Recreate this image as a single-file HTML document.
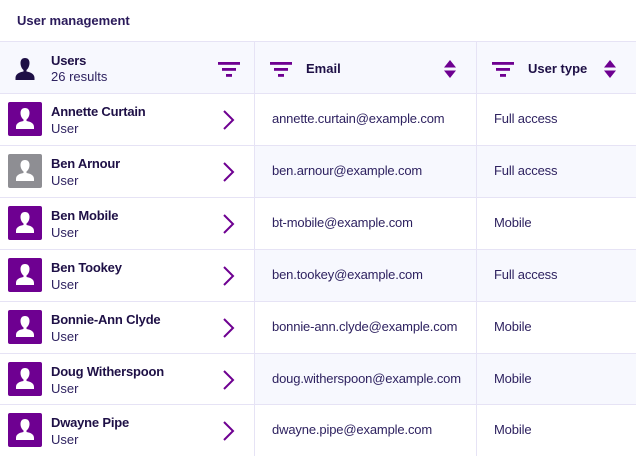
<!DOCTYPE html>
<html><head><meta charset="utf-8"><style>
*{margin:0;padding:0;box-sizing:border-box}
body{width:636px;height:456px;overflow:hidden;background:#fff;font-family:"Liberation Sans",sans-serif;color:#1e1046;position:relative}
.title{position:absolute;left:17px;top:13px;font-size:13px;font-weight:bold;color:#2a1a5a}
.row{position:absolute;left:0;width:636px;height:52px;border-top:1px solid #e6e3f5}
.c1{position:absolute;left:0;top:0;width:255px;height:100%;background:#fff;border-right:1px solid #e6e3f5}
.c2{position:absolute;left:255px;top:0;width:222px;height:100%;border-right:1px solid #e6e3f5}
.hdr{background:#f7f8fe}
.hdr .c1{background:#f7f8fe}
.alt{background:#f7f8fe}
.av{position:absolute;left:8px;top:8px;width:34px;height:34px;border-radius:2px;background:#6e0091}
.av.g{background:#8e8e93}
.av svg{position:absolute;left:0;top:0}
.nm{position:absolute;left:51px;top:10px;font-size:13px;font-weight:bold;line-height:16px;letter-spacing:-0.2px}
.sub{position:absolute;left:51px;top:27px;font-size:13px;line-height:16px;color:#2e2260}
.chev{position:absolute;left:220px;top:15px}
.em{position:absolute;left:272px;top:17px;font-size:13px;color:#2e2260;letter-spacing:-0.15px}
.ty{position:absolute;left:494px;top:17px;font-size:13px;color:#2e2260;letter-spacing:-0.15px}
.hb{position:absolute;font-size:13px;font-weight:bold}
</style></head><body>
<div class="title">User management</div>

<div class="row hdr" style="top:41px;height:52px">
 <div class="c1">
  <svg style="position:absolute;left:14px;top:15px" width="22" height="24" viewBox="0 0 22 24"><path d="M11 1c3 0 4.5 2 4.5 5s-1.5 6-3 7v1.5c5 .8 8 3 8 6.5v2H1.5v-2c0-3.5 3-5.7 8-6.5V13c-1.5-1-3-4-3-7S8 1 11 1z" fill="#1e1046"/></svg>
  <div class="nm" style="top:11px">Users</div>
  <div class="sub" style="top:27px;color:#2e2260">26 results</div>
  <svg style="position:absolute;left:218px;top:19px" width="22" height="16"><rect x="0" y="1" width="22" height="2.8" fill="#6e0091"/><rect x="4" y="7" width="14" height="2.8" fill="#6e0091"/><rect x="8" y="13" width="6" height="2.8" fill="#6e0091"/></svg>
 </div>
 <div class="c2">
  <svg style="position:absolute;left:15px;top:19px" width="22" height="16"><rect x="0" y="1" width="22" height="2.8" fill="#6e0091"/><rect x="4" y="7" width="14" height="2.8" fill="#6e0091"/><rect x="8" y="13" width="6" height="2.8" fill="#6e0091"/></svg>
  <div class="hb" style="left:51px;top:19px">Email</div>
  <svg style="position:absolute;left:188px;top:15px" width="14" height="24"><path d="M1 10.5L7 3l6 7.5z M1 13.5l6 7.5 6-7.5z" fill="#6e0091"/></svg>
 </div>
 <svg style="position:absolute;left:492px;top:19px" width="22" height="16"><rect x="0" y="1" width="22" height="2.8" fill="#6e0091"/><rect x="4" y="7" width="14" height="2.8" fill="#6e0091"/><rect x="8" y="13" width="6" height="2.8" fill="#6e0091"/></svg>
 <div class="hb" style="left:528px;top:19px">User type</div>
 <svg style="position:absolute;left:603px;top:15px" width="14" height="24"><path d="M1 10.5L7 3l6 7.5z M1 13.5l6 7.5 6-7.5z" fill="#6e0091"/></svg>
</div>

<div class="row" style="top:93px"><div class="c1"><div class="av"><svg width="34" height="34" viewBox="0 0 34 34"><path d="M17 6c3 0 4.5 2 4.5 5s-1.5 5.5-3 6.5v1.5c4.5.7 7.5 2.5 7.5 6v2H8v-2c0-3.5 3-5.3 7.5-6v-1.5c-1.5-1-3-3.5-3-6.5S14 6 17 6z" fill="#fff"/></svg></div><div class="nm">Annette Curtain</div><div class="sub">User</div><svg class="chev" width="16" height="22"><path d="M4 2l9 9-9 9" stroke="#6e0091" stroke-width="2" fill="none"/></svg></div><div class="c2"></div><div class="em">annette.curtain@example.com</div><div class="ty">Full access</div></div>

<div class="row alt" style="top:145px"><div class="c1"><div class="av g"><svg width="34" height="34" viewBox="0 0 34 34"><path d="M17 6c3 0 4.5 2 4.5 5s-1.5 5.5-3 6.5v1.5c4.5.7 7.5 2.5 7.5 6v2H8v-2c0-3.5 3-5.3 7.5-6v-1.5c-1.5-1-3-3.5-3-6.5S14 6 17 6z" fill="#fff"/></svg></div><div class="nm">Ben Arnour</div><div class="sub">User</div><svg class="chev" width="16" height="22"><path d="M4 2l9 9-9 9" stroke="#6e0091" stroke-width="2" fill="none"/></svg></div><div class="c2"></div><div class="em">ben.arnour@example.com</div><div class="ty">Full access</div></div>

<div class="row" style="top:197px"><div class="c1"><div class="av"><svg width="34" height="34" viewBox="0 0 34 34"><path d="M17 6c3 0 4.5 2 4.5 5s-1.5 5.5-3 6.5v1.5c4.5.7 7.5 2.5 7.5 6v2H8v-2c0-3.5 3-5.3 7.5-6v-1.5c-1.5-1-3-3.5-3-6.5S14 6 17 6z" fill="#fff"/></svg></div><div class="nm">Ben Mobile</div><div class="sub">User</div><svg class="chev" width="16" height="22"><path d="M4 2l9 9-9 9" stroke="#6e0091" stroke-width="2" fill="none"/></svg></div><div class="c2"></div><div class="em">bt-mobile@example.com</div><div class="ty">Mobile</div></div>

<div class="row alt" style="top:249px"><div class="c1"><div class="av"><svg width="34" height="34" viewBox="0 0 34 34"><path d="M17 6c3 0 4.5 2 4.5 5s-1.5 5.5-3 6.5v1.5c4.5.7 7.5 2.5 7.5 6v2H8v-2c0-3.5 3-5.3 7.5-6v-1.5c-1.5-1-3-3.5-3-6.5S14 6 17 6z" fill="#fff"/></svg></div><div class="nm">Ben Tookey</div><div class="sub">User</div><svg class="chev" width="16" height="22"><path d="M4 2l9 9-9 9" stroke="#6e0091" stroke-width="2" fill="none"/></svg></div><div class="c2"></div><div class="em">ben.tookey@example.com</div><div class="ty">Full access</div></div>

<div class="row" style="top:301px"><div class="c1"><div class="av"><svg width="34" height="34" viewBox="0 0 34 34"><path d="M17 6c3 0 4.5 2 4.5 5s-1.5 5.5-3 6.5v1.5c4.5.7 7.5 2.5 7.5 6v2H8v-2c0-3.5 3-5.3 7.5-6v-1.5c-1.5-1-3-3.5-3-6.5S14 6 17 6z" fill="#fff"/></svg></div><div class="nm">Bonnie-Ann Clyde</div><div class="sub">User</div><svg class="chev" width="16" height="22"><path d="M4 2l9 9-9 9" stroke="#6e0091" stroke-width="2" fill="none"/></svg></div><div class="c2"></div><div class="em">bonnie-ann.clyde@example.com</div><div class="ty">Mobile</div></div>

<div class="row alt" style="top:353px"><div class="c1"><div class="av"><svg width="34" height="34" viewBox="0 0 34 34"><path d="M17 6c3 0 4.5 2 4.5 5s-1.5 5.5-3 6.5v1.5c4.5.7 7.5 2.5 7.5 6v2H8v-2c0-3.5 3-5.3 7.5-6v-1.5c-1.5-1-3-3.5-3-6.5S14 6 17 6z" fill="#fff"/></svg></div><div class="nm">Doug Witherspoon</div><div class="sub">User</div><svg class="chev" width="16" height="22"><path d="M4 2l9 9-9 9" stroke="#6e0091" stroke-width="2" fill="none"/></svg></div><div class="c2"></div><div class="em">doug.witherspoon@example.com</div><div class="ty">Mobile</div></div>

<div class="row" style="top:404px"><div class="c1"><div class="av"><svg width="34" height="34" viewBox="0 0 34 34"><path d="M17 6c3 0 4.5 2 4.5 5s-1.5 5.5-3 6.5v1.5c4.5.7 7.5 2.5 7.5 6v2H8v-2c0-3.5 3-5.3 7.5-6v-1.5c-1.5-1-3-3.5-3-6.5S14 6 17 6z" fill="#fff"/></svg></div><div class="nm">Dwayne Pipe</div><div class="sub">User</div><svg class="chev" width="16" height="22"><path d="M4 2l9 9-9 9" stroke="#6e0091" stroke-width="2" fill="none"/></svg></div><div class="c2"></div><div class="em">dwayne.pipe@example.com</div><div class="ty">Mobile</div></div>
</body></html>
